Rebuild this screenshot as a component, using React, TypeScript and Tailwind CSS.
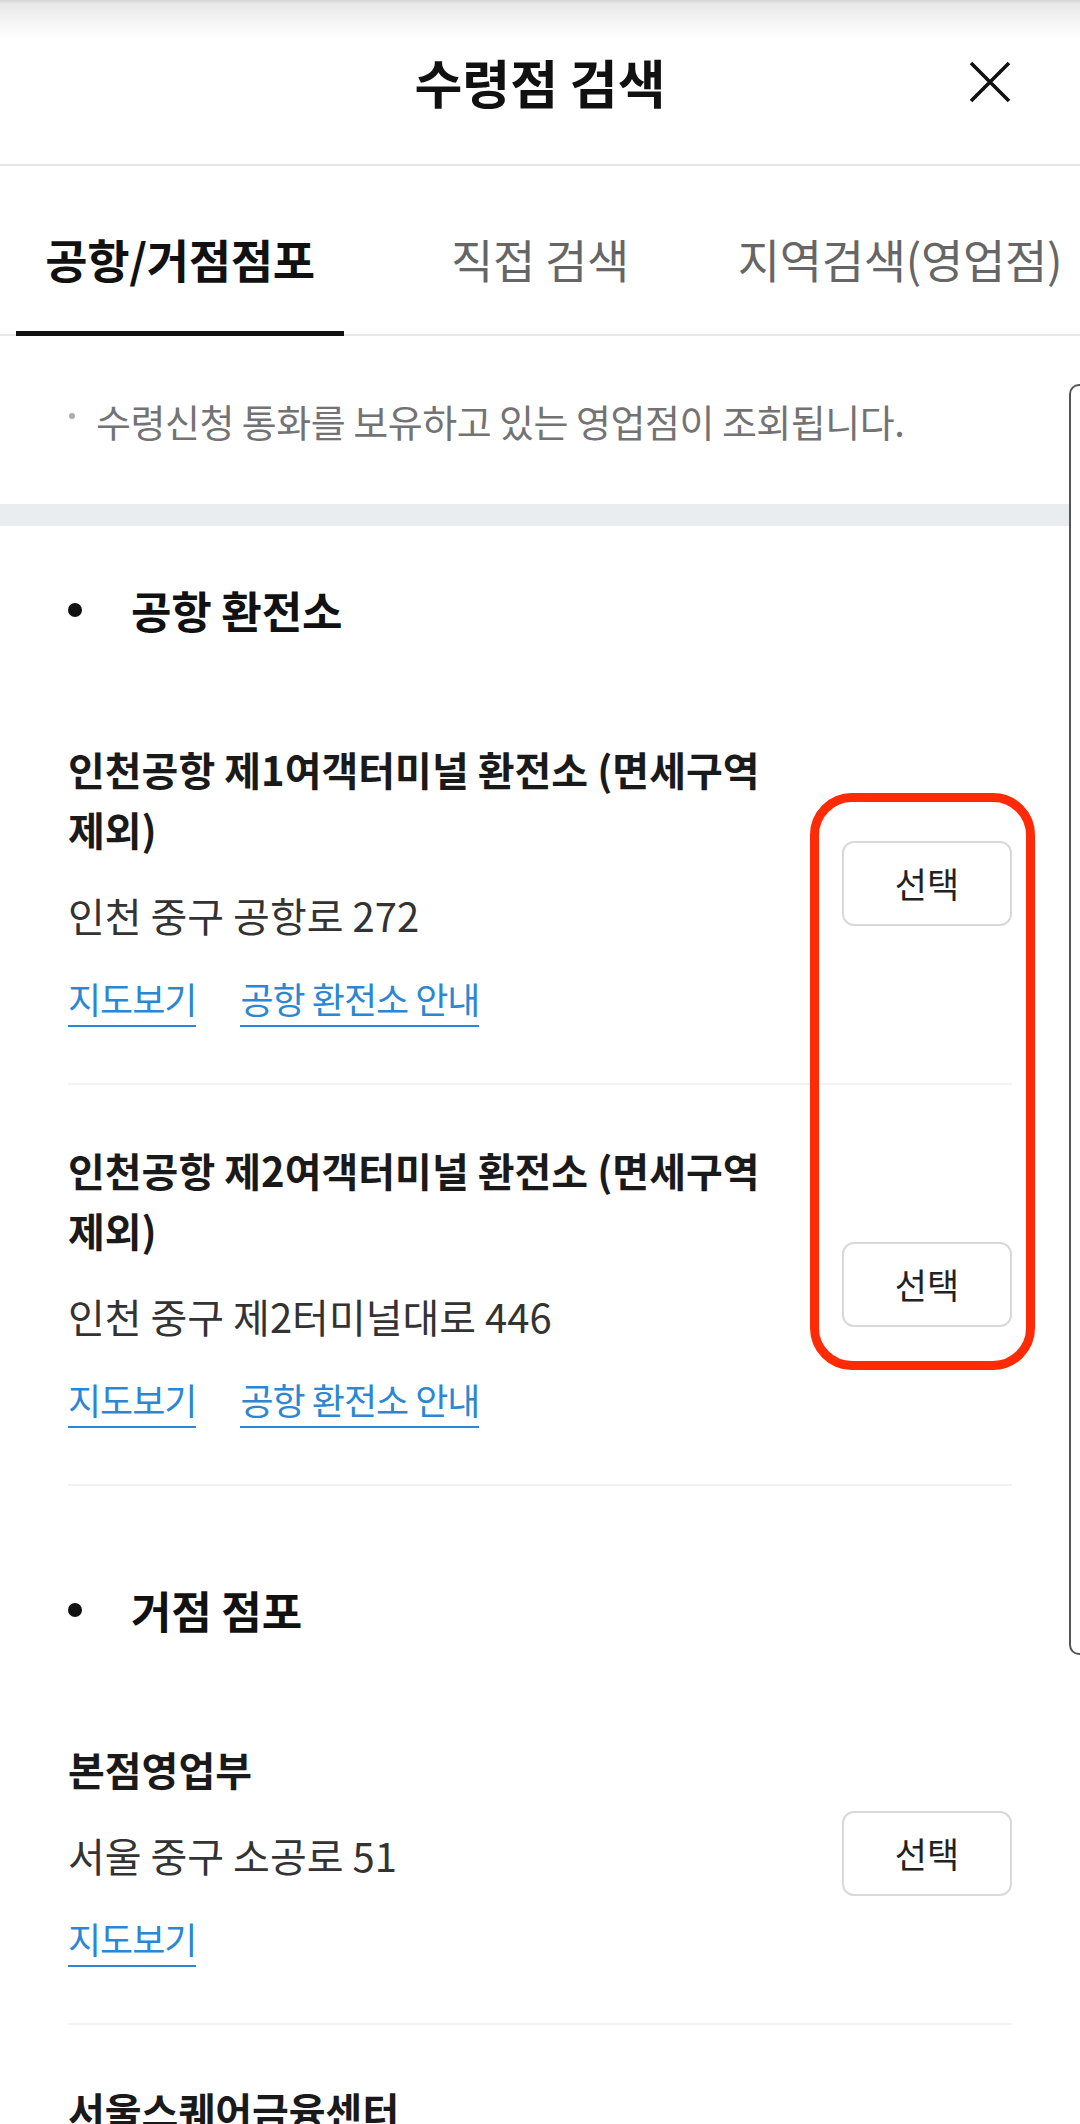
import React from 'react';

interface Branch {
  name: string;
  address: string;
  links: string[];
}

const airportBranches: Branch[] = [
  {
    name: '인천공항 제1여객터미널 환전소 (면세구역 제외)',
    address: '인천 중구 공항로 272',
    links: ['지도보기', '공항 환전소 안내'],
  },
  {
    name: '인천공항 제2여객터미널 환전소 (면세구역 제외)',
    address: '인천 중구 제2터미널대로 446',
    links: ['지도보기', '공항 환전소 안내'],
  },
];

const hubBranches: Branch[] = [
  { name: '본점영업부', address: '서울 중구 소공로 51', links: ['지도보기'] },
  { name: '서울스퀘어금융센터', address: '서울 중구 한강대로 416', links: ['지도보기'] },
];

const tabs = ['공항/거점점포', '직접 검색', '지역검색(영업점)'];

function SectionTitle({ title }: { title: string }) {
  return (
    <div className="flex items-center pt-[59px] pb-[49px]">
      <span className="h-[14px] w-[14px] rounded-full bg-[#111]" />
      <h3 className="ml-[49px] text-[44px] leading-[50px] font-bold tracking-[-0.2px] text-[#111]">{title}</h3>
    </div>
  );
}

function BranchRow({ branch }: { branch: Branch }) {
  return (
    <div className="flex items-center gap-[40px] border-b-2 border-[#f2f2f2] pt-[55px] pb-[56px]">
      <div className="flex-1">
        <p className="text-[40px] leading-[60px] font-bold break-keep text-[#1a1a1a]">{branch.name}</p>
        <p className="mt-[31px] text-[40px] leading-[50px] text-[#333]">{branch.address}</p>
        <div className="mt-[33px] flex items-start gap-[44px]">
          {branch.links.map((link) => (
            <a
              key={link}
              href="#"
              className="border-b-2 border-[#2b87d3] pb-[2px] text-[36px] leading-[50px] tracking-[-1px] text-[#2b87d3]"
            >
              {link}
            </a>
          ))}
        </div>
      </div>
      <button className="h-[85px] w-[170px] shrink-0 rounded-[12px] border-2 border-[#d9d9d9] bg-white text-[35px] text-[#222]">
        선택
      </button>
    </div>
  );
}

export default function App() {
  const [activeTab, setActiveTab] = React.useState(0);

  return (
    <div className="relative min-h-[2124px] w-[1080px] overflow-hidden bg-white font-['Noto_Sans_CJK_KR','Noto_Sans',sans-serif]">
      {/* header */}
      <div className="grid h-[166px] grid-cols-[1fr_auto_1fr] items-center border-b-2 border-[#e6e6e6] bg-[linear-gradient(to_bottom,#d6d6d6_0px,#e9e9e9_4px,#ffffff_38px)]">
        <div />
        <h1 className="text-[52px] leading-none font-bold text-[#111]">수령점 검색</h1>
        <div className="flex justify-end pr-[68px]">
          <button aria-label="닫기">
            <svg width="44" height="44" viewBox="0 0 44 44" fill="none" stroke="#111" strokeWidth="3.6">
              <path d="M3 3L41 41M41 3L3 41" />
            </svg>
          </button>
        </div>
      </div>

      {/* tabs */}
      <div className="grid h-[170px] grid-cols-3 border-b-2 border-[#e8e8e8]">
        {tabs.map((tab, i) => (
          <button key={tab} onClick={() => setActiveTab(i)} className="flex items-end justify-center">
            <span
              className={`-mb-[2px] border-b-[5px] px-[29px] pb-[43px] text-[46px] leading-[60px] tracking-[-0.3px] whitespace-nowrap ${
                activeTab === i ? 'border-[#111] font-bold text-[#111]' : 'border-transparent text-[#666]'
              }`}
            >
              {tab}
            </span>
          </button>
        ))}
      </div>

      {/* notice */}
      <div className="flex items-start px-[68px] pt-[60px] pb-[58px]">
        <span className="mt-[17px] ml-[1px] h-[6px] w-[6px] shrink-0 rounded-full bg-[#aaa]" />
        <p className="ml-[21px] text-[38px] leading-[50px] tracking-[-0.5px] text-[#737373]">
          수령신청 통화를 보유하고 있는 영업점이 조회됩니다.
        </p>
      </div>

      <div className="h-[22px] bg-[#e9edf0]" />

      <div className="px-[68px]">
        <section>
          <SectionTitle title="공항 환전소" />
          {airportBranches.map((b) => (
            <BranchRow key={b.name} branch={b} />
          ))}
        </section>
        <section className="mt-[40px]">
          <SectionTitle title="거점 점포" />
          {hubBranches.map((b) => (
            <BranchRow key={b.name} branch={b} />
          ))}
        </section>
      </div>

      {/* scroll indicator */}
      <div className="absolute top-[384px] left-[1069px] h-[1271px] w-[30px] rounded-[10px] border-2 border-[#555] bg-white" />

      {/* highlight around the select buttons */}
      <div className="pointer-events-none absolute top-[793px] left-[810px] h-[577px] w-[225px] rounded-[42px] border-[9px] border-[#ff2a06]" />
    </div>
  );
}
